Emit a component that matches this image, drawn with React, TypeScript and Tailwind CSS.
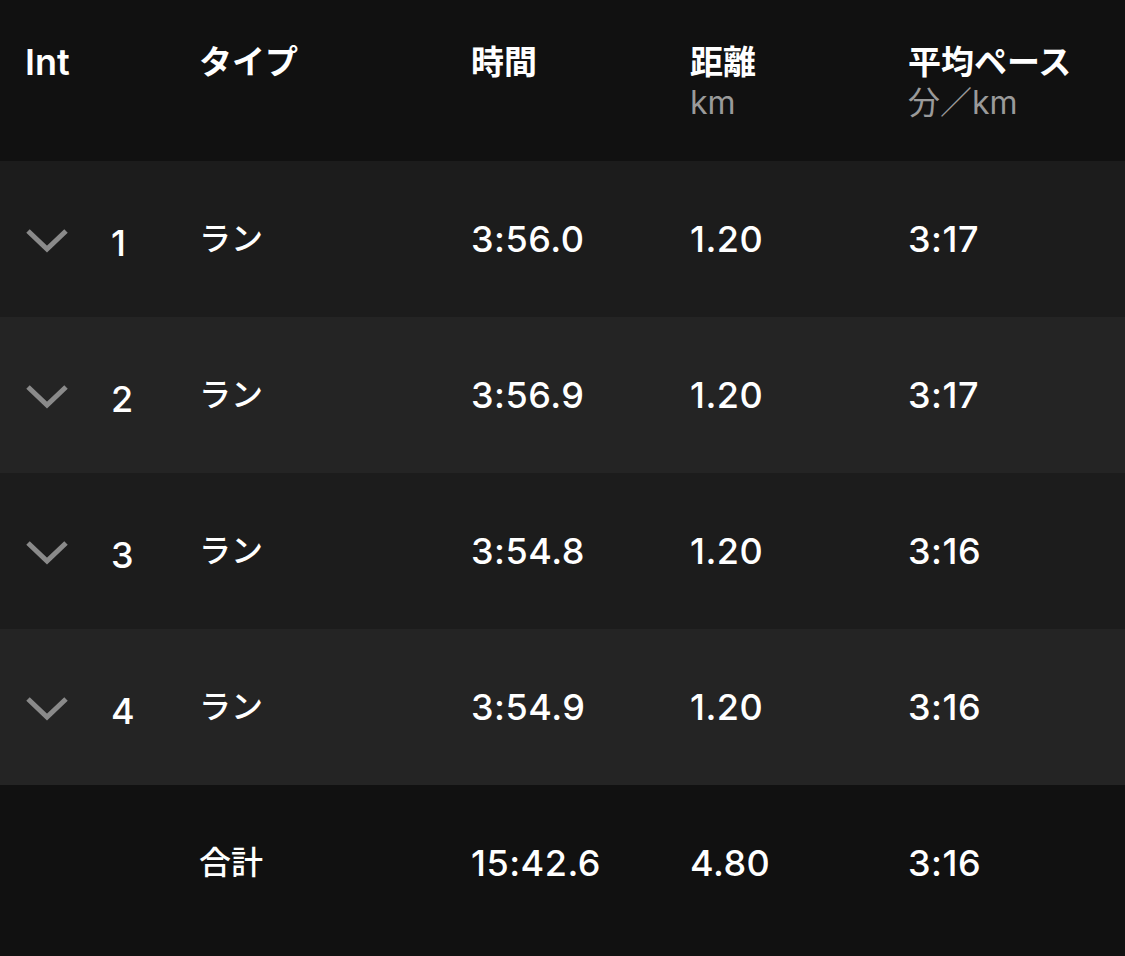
const rows = [
  { n: 1, time: "3:56.0", dist: "1.20", pace: "3:17" },
  { n: 2, time: "3:56.9", dist: "1.20", pace: "3:17" },
  { n: 3, time: "3:54.8", dist: "1.20", pace: "3:16" },
  { n: 4, time: "3:54.9", dist: "1.20", pace: "3:16" },
];

const Chevron = () => (
  <svg width="44" height="26" viewBox="0 0 44 26" fill="none">
    <path d="M3 3L22 21L41 3" stroke="#8a8a8a" strokeWidth="5" />
  </svg>
);

const cols = "grid grid-cols-[199px_272px_219px_218px_1fr]";

export default function App() {
  return (
    <div className="w-[1125px] h-[956px] bg-[#111111] text-white font-['Inter','Noto_Sans_CJK_JP',sans-serif]">
      {/* header */}
      <div className={`${cols} h-[161px] pt-[42px] text-[33px] leading-[40px] font-semibold`}>
        <div className="pl-[25px] text-[36px]">Int</div>
        <div>タイプ</div>
        <div>時間</div>
        <div>
          <div>距離</div>
          <div className="mt-[2px] text-[32px] leading-[38px] font-normal text-[#9a9a9a]">km</div>
        </div>
        <div>
          <div>平均ペース</div>
          <div className="mt-[2px] text-[32px] leading-[38px] font-normal text-[#9a9a9a]">分／km</div>
        </div>
      </div>

      {rows.map((r, i) => (
        <div
          key={r.n}
          className={`${cols} h-[156px] items-center text-[36px] leading-[44px] font-medium tracking-[0.5px] ${
            i % 2 === 0 ? "bg-[#1c1c1c]" : "bg-[#242424]"
          }`}
        >
          <div className="flex items-center pl-[25px]">
            <div className="mt-[4px]">
              <Chevron />
            </div>
            <span className="ml-[42px] mt-[8px]">{r.n}</span>
          </div>
          <div className="text-[32px] tracking-normal">ラン</div>
          <div>{r.time}</div>
          <div>{r.dist}</div>
          <div>{r.pace}</div>
        </div>
      ))}

      {/* total */}
      <div className={`${cols} h-[171px] items-center pb-[16px] text-[36px] leading-[44px] font-medium tracking-[0.5px]`}>
        <div />
        <div className="text-[32px] tracking-normal">合計</div>
        <div>15:42.6</div>
        <div>4.80</div>
        <div>3:16</div>
      </div>
    </div>
  );
}
